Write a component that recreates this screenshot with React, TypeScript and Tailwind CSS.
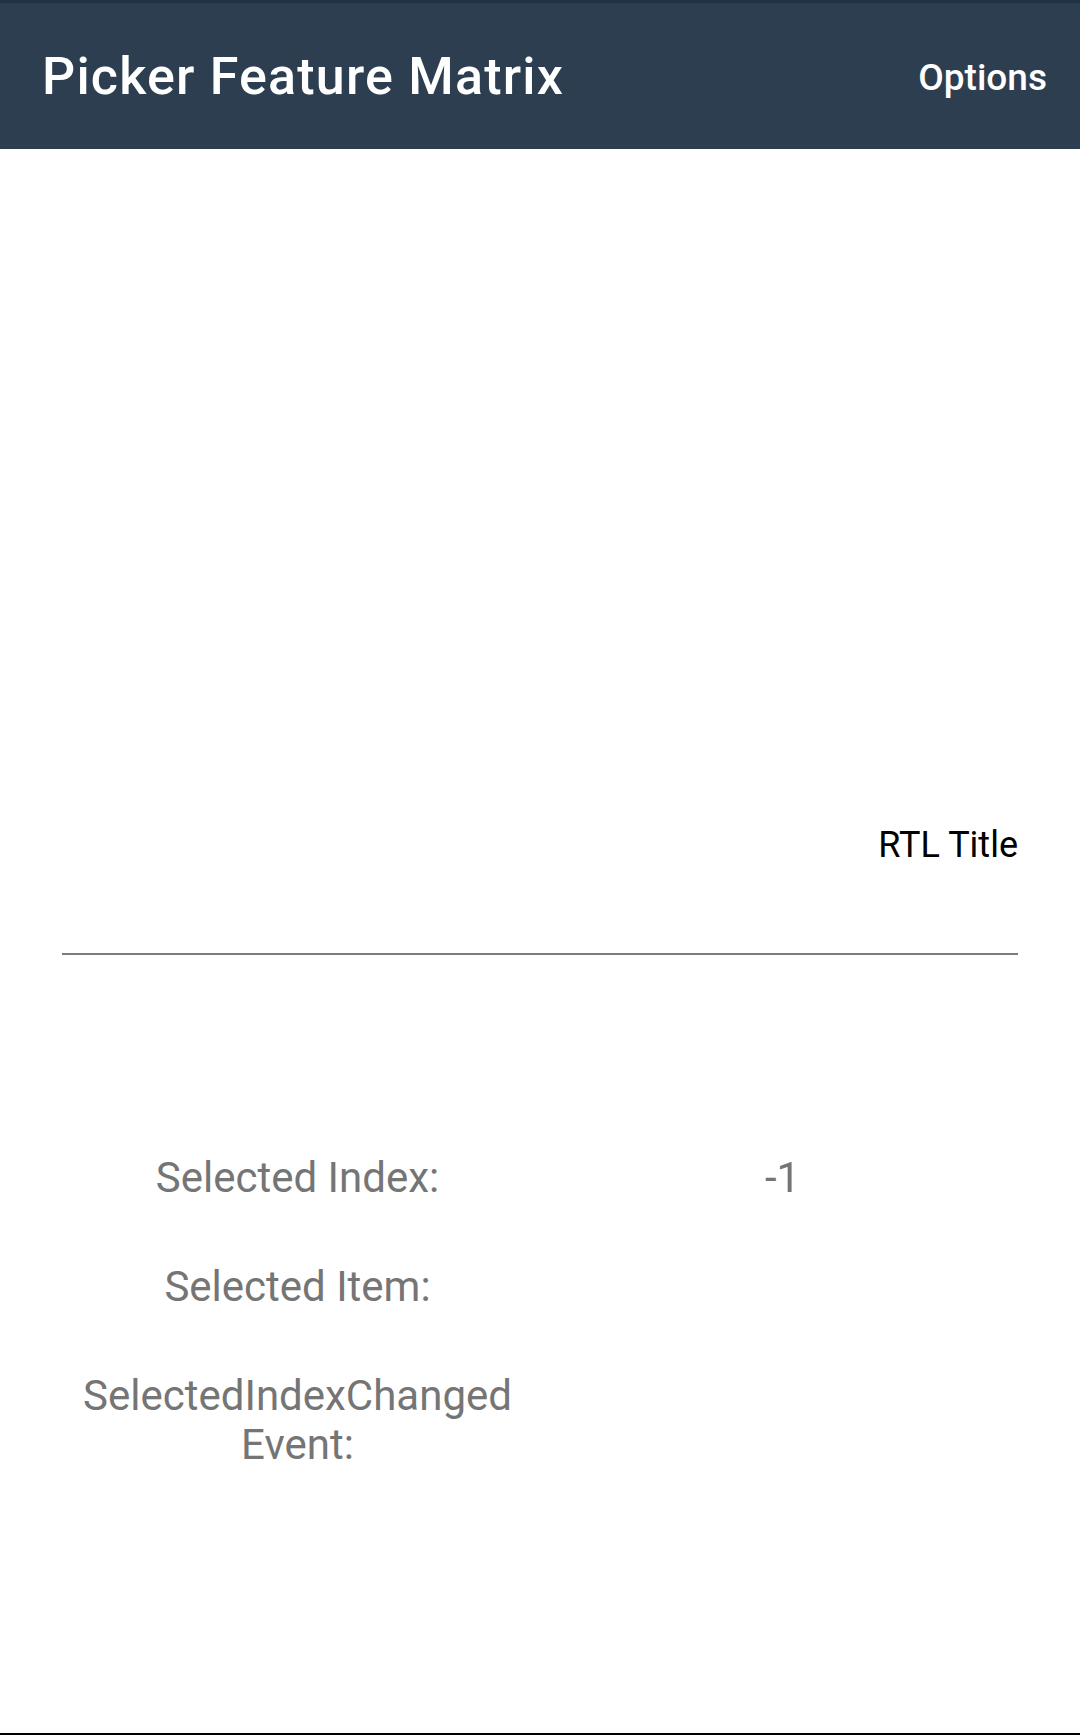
import React from "react";

export default function App() {
  const rows: { label: React.ReactNode; value: string }[] = [
    { label: "Selected Index:", value: "-1" },
    { label: "Selected Item:", value: "" },
    {
      label: (
        <>
          SelectedIndexChanged
          <br />
          Event:
        </>
      ),
      value: "",
    },
  ];
  return (
    <div
      className="flex h-[1735px] w-[1080px] flex-col overflow-hidden bg-white"
      style={{ fontFamily: "Roboto, 'Noto Sans', sans-serif" }}
    >
      <header className="flex h-[149px] flex-col bg-[#2c3e50]">
        <div className="h-[3px] bg-[#1f3246]" />
        <div className="flex flex-1 items-center justify-between pl-[42px] pr-[33px] pt-[2px]">
          <h1 className="text-[52px] font-medium leading-none tracking-[1.2px] text-white">Picker Feature Matrix</h1>
          <span className="text-[37px] font-medium leading-none text-white">Options</span>
        </div>
      </header>

      <main className="flex flex-1 flex-col">
        <section className="px-[62px]">
          <div className="mt-[675px] text-right text-[36px] leading-[42px] text-black">RTL Title</div>
          <div className="mt-[87px] h-[2px] bg-[#7c7c7c]" />
        </section>

        <section className="mt-[198px] grid grid-cols-2 gap-y-[60px] px-[55px] text-[42px] leading-[49px] text-[#757575]">
          {rows.map((r, i) => (
            <React.Fragment key={i}>
              <div className="flex items-center justify-center text-center">{r.label}</div>
              <div className="flex items-center justify-center text-center">{r.value}</div>
            </React.Fragment>
          ))}
        </section>
      </main>

      <div className="h-[2px] bg-black" />
    </div>
  );
}
